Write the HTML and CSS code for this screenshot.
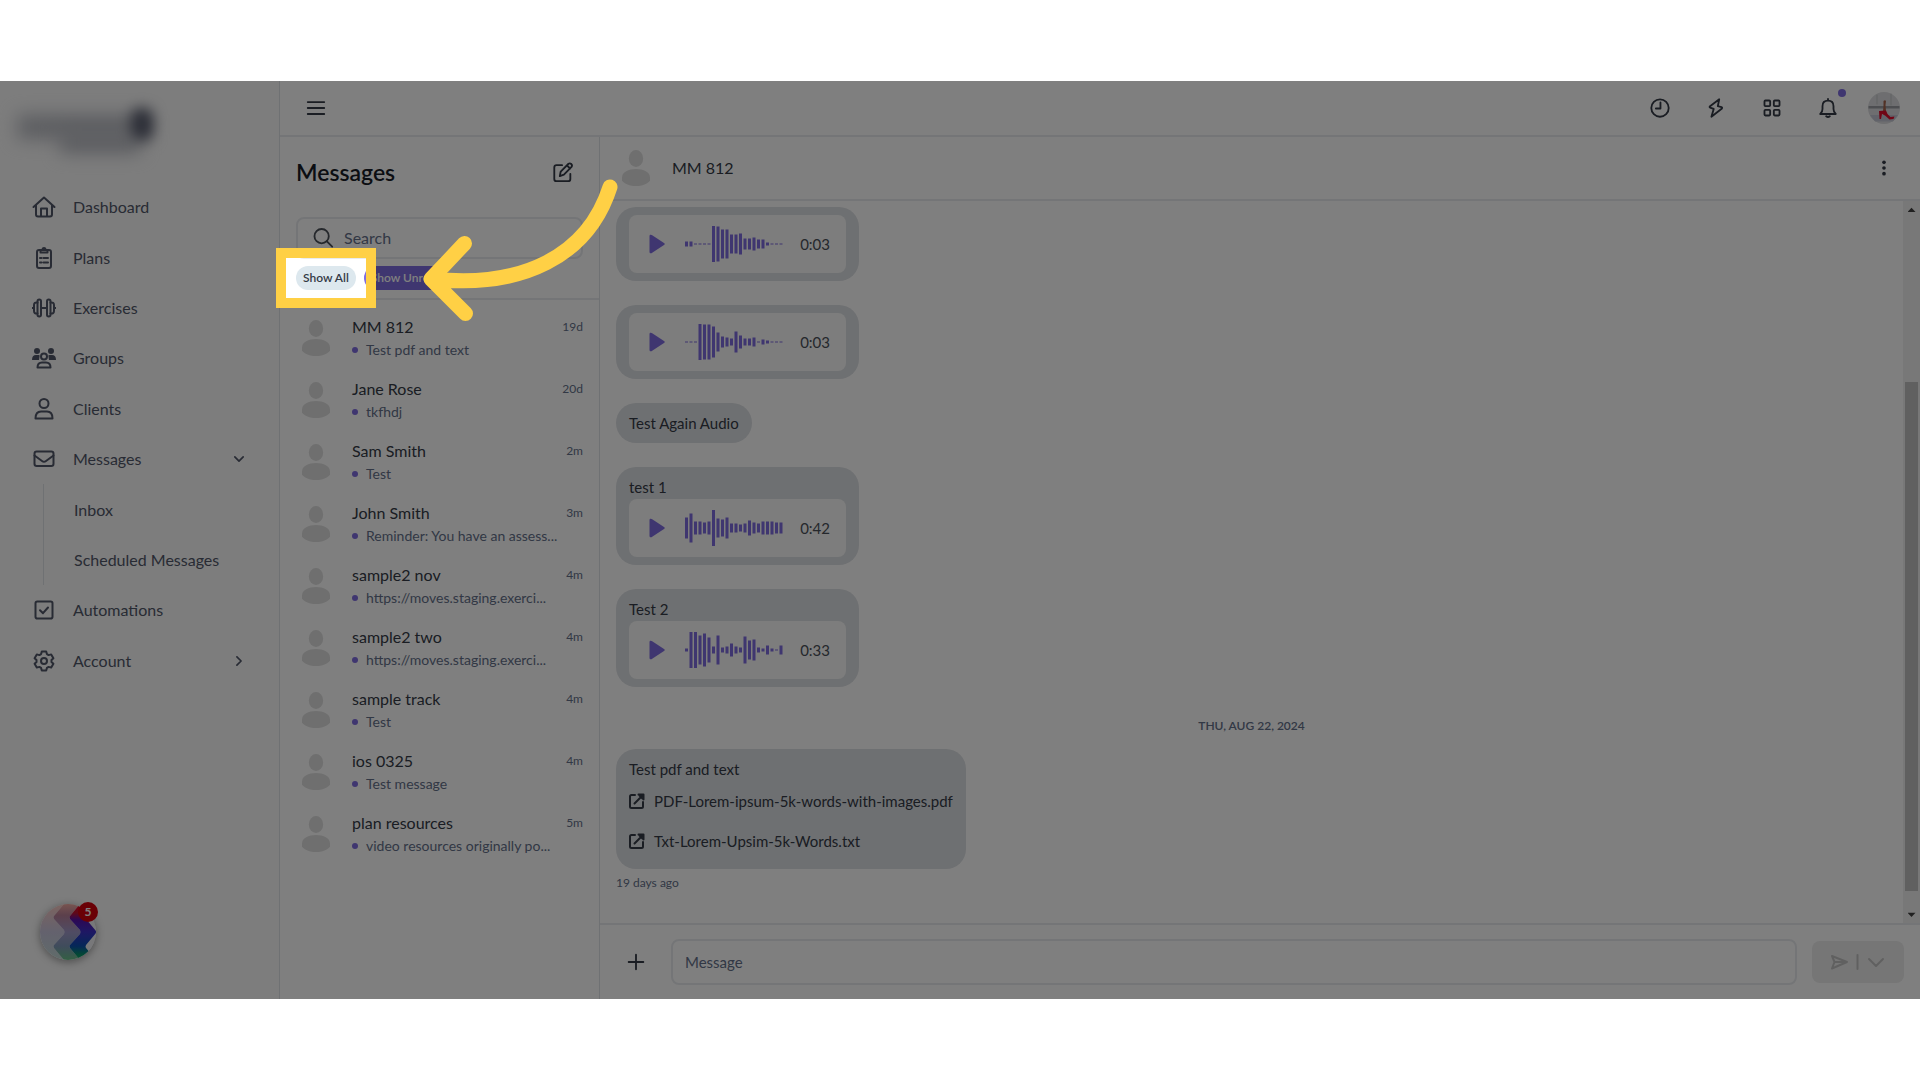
FILE: index.html
```html
<!DOCTYPE html>
<html lang="en">
<head>
<meta charset="utf-8">
<title>Messages</title>
<link rel="stylesheet" href="styles.css">
</head>
<body>
<svg class="defs" aria-hidden="true">
  <symbol id="person" viewBox="0 0 28 36"><ellipse cx="14" cy="8.500" rx="7.200" ry="8.500"/><path d="M14 19c7.500 0 14 3 14 8.500v3C26 34 20 36 14 36S2 34 0 30.500v-3C0 22 6.500 19 14 19z"/></symbol>
  <symbol id="play" viewBox="0 0 16 20"><path d="M0.500 2.300C0.500 0.600 2 0.400 3.200 1.300L15 9c1 0.700 1 1.300 0 2L3.200 18.700C2 19.600 0.500 19.400 0.500 17.700z"/></symbol>
  <symbol id="external" viewBox="0 0 16 16"><path d="M6 2H2.500Q1 2 1 3.500v10Q1 15 2.500 15h10Q14 15 14 13.500V9M5.500 10.500 14 2M9.500 1.500H14.500V6.500M10.500 2.500l3 3"/></symbol>
</svg>
<div class="app">
  <aside class="sidebar">
    <div class="logo" aria-hidden="true"><i class="logo-word"></i><i class="logo-line"></i><i class="logo-mark"></i></div>
    <nav>
      <ul class="nav">
        <li><a href="#"><svg viewBox="0 0 24 24"><path d="M1.500 12 12 2.500 22.500 12M4 10v9.500Q4 21.500 6 21.500h12q2 0 2-2V10M9 21.500v-8h6v8"/></svg>Dashboard</a></li>
        <li><a href="#"><svg viewBox="0 0 24 24"><rect x="5" y="4" width="14" height="18" rx="2"/><path d="M8.500 6.500V4h2q0-2 1.500-2t1.500 2h2v2.500zM8 12h1.500M11.500 12H16M8 16.500h1.500M11.500 16.500H16"/></svg>Plans</a></li>
        <li><a href="#"><svg viewBox="0 0 24 24"><path d="M9 12h6M0 12h1.500M22.500 12H24"/><rect x="5.500" y="3.500" width="3.500" height="17" rx="1.700"/><rect x="15" y="3.500" width="3.500" height="17" rx="1.700"/><path d="M5.500 6.500Q2 6 2 9v6q0 3 3.500 2.500M18.500 6.500Q22 6 22 9v6q0 3-3.500 2.500"/></svg>Exercises</a></li>
        <li><a href="#"><svg viewBox="0 0 24 24"><g class="solid"><circle cx="5" cy="5" r="3"/><circle cx="19" cy="5" r="3"/><path d="M0 14q0-5 4-5h3q1 0 .5 1.500L7 14zM24 14q0-5-4-5h-3q-1 0-.5 1.500L17 14z"/></g><circle cx="12" cy="10.500" r="3"/><path d="M5.500 21.500q0-5 4.500-5h4q4.500 0 4.500 5z"/></svg>Groups</a></li>
        <li><a href="#"><svg viewBox="0 0 24 24"><circle cx="12" cy="6.500" r="4.500"/><path d="M3.500 21.500q0-7 5.500-7h6q5.500 0 5.500 7z"/></svg>Clients</a></li>
        <li><a href="#"><svg viewBox="0 0 24 24"><rect x="2.500" y="4.500" width="19" height="14.500" rx="2.200"/><path d="M2.500 8.500 10 14q2 1.500 4 0l7.500-5.500"/></svg>Messages<svg class="caret" viewBox="0 0 12 12"><path d="M1 3.500l5 5 5-5"/></svg></a></li>
        <li class="subnav">
          <ul>
            <li><a href="#">Inbox</a></li>
            <li><a href="#">Scheduled Messages</a></li>
          </ul>
        </li>
        <li><a href="#"><svg viewBox="0 0 24 24"><rect x="3.500" y="3.500" width="17" height="17" rx="1.800"/><path d="M8 12.200l3 3 5-5.700"/></svg>Automations</a></li>
        <li><a href="#"><svg viewBox="0 0 24 24"><circle cx="12" cy="12" r="3"/><path d="M9.800 2.500h4.400l.7 2.600 1.700 1 2.600-.7 2.200 3.800L19.500 11v2l1.900 1.800-2.200 3.800-2.600-.7-1.700 1-.7 2.600H9.800l-.7-2.600-1.700-1-2.600.7-2.200-3.800L4.500 13v-2L2.600 9.200l2.200-3.800 2.600.7 1.700-1z"/></svg>Account<svg class="caret" viewBox="0 0 12 12"><path d="M3.500 1l5 5-5 5"/></svg></a></li>
      </ul>
    </nav>
  </aside>

  <div class="main">
    <header class="topbar">
      <button class="icon-btn" aria-label="Toggle menu"><svg viewBox="0 0 24 24"><path d="M3 5.500h18M3 12h18M3 18.500h18"/></svg></button>
      <div class="tools">
        <button class="icon-btn" aria-label="History"><svg viewBox="0 0 24 24"><circle cx="12" cy="12" r="9.500"/><path d="M12.500 6v6.500H7.500"/></svg></button>
        <button class="icon-btn" aria-label="Quick actions"><svg viewBox="0 0 24 24"><path d="M15.500 2.500 5.500 10q-1 1 0 1.500l4 1.500L7 21.500l11.500-9q.5-1-.5-1.500l-4-1z"/></svg></button>
        <button class="icon-btn" aria-label="Apps"><svg viewBox="0 0 24 24"><rect x="3.800" y="3.800" width="6.200" height="6.200" rx="1"/><rect x="14" y="3.800" width="6.200" height="6.200" rx="1"/><rect x="3.800" y="14" width="6.200" height="6.200" rx="1"/><rect x="14" y="14" width="6.200" height="6.200" rx="1"/></svg></button>
        <button class="icon-btn bell" aria-label="Notifications"><svg viewBox="0 0 24 24"><path d="M12 2v2M3.500 18.500q2.500-2 2.500-5.500v-3q0-6 6-6t6 6v3q0 3.500 2.500 5.500zM10 21q2 1.500 4 0"/></svg><i class="alert"></i></button>
        <button class="icon-btn profile" aria-label="Profile"><svg viewBox="0 0 32 32"><circle cx="16" cy="16" r="16" fill="#dcdde0"/><path d="M0.500 14h31v2.500H.5z" fill="#9a9ca2"/><path d="M2 23h28l-5 6.500H7z" fill="#c4c7d4"/><path d="M9 3v9M23 2v11" stroke="#c2c3c6" stroke-width="1"/><path d="M15.500 9q1.500-1.500 2.500 0l-.5 4 .5 6h-3l.5-5z" fill="#a5654d"/><path d="M11 19l7-.5 1.500 3.500 3 3 4-.5-1 2.500-4 .5-4.500-4-3-1.500-1 5h-1.500z" fill="#e00d2c"/></svg></button>
      </div>
    </header>

    <div class="workspace">
      <section class="inbox">
        <div class="inbox-head">
          <div class="title-row">
            <h1>Messages</h1>
            <button class="icon-btn" aria-label="New message"><svg viewBox="0 0 24 24"><path d="M11 4.500H5q-2.500 0-2.500 2.500v12.500Q2.500 22 5 22h12.500q2.500 0 2.500-2.500V14M8.500 16.500l1-5 8.500-8.500q1.500-1 3 .3t.3 3.200L13 14.800zM16.500 5l3.300 3.200"/></svg></button>
          </div>
          <label class="search"><svg viewBox="0 0 24 24"><circle cx="10.500" cy="10" r="7.800"/><path d="M16 15.500l6 6"/></svg><input type="text" placeholder="Search" aria-label="Search"></label>
          <div class="filters">
            <div class="guided">
              <button class="chip">Show All</button>
              <span class="spotlight"></span>
              <svg class="arrow" viewBox="415 175 210 155" aria-hidden="true"><path d="M610 187C588 256 522 289 432 279M464.500 243.500 431 279l34.500 34.500"/></svg>
            </div>
            <button class="chip chip-on">Show Unread</button>
          </div>
        </div>
        <ul class="threads">
          <li><svg class="person"><use href="#person"/></svg><div class="info"><div class="who"><b>MM 812</b><time>19d</time></div><p><span>Test pdf and text</span></p></div></li>
          <li><svg class="person"><use href="#person"/></svg><div class="info"><div class="who"><b>Jane Rose</b><time>20d</time></div><p><span>tkfhdj</span></p></div></li>
          <li><svg class="person"><use href="#person"/></svg><div class="info"><div class="who"><b>Sam Smith</b><time>2m</time></div><p><span>Test</span></p></div></li>
          <li><svg class="person"><use href="#person"/></svg><div class="info"><div class="who"><b>John Smith</b><time>3m</time></div><p><span>Reminder: You have an assess...</span></p></div></li>
          <li><svg class="person"><use href="#person"/></svg><div class="info"><div class="who"><b>sample2 nov</b><time>4m</time></div><p><span>https://moves.staging.exerci...</span></p></div></li>
          <li><svg class="person"><use href="#person"/></svg><div class="info"><div class="who"><b>sample2 two</b><time>4m</time></div><p><span>https://moves.staging.exerci...</span></p></div></li>
          <li><svg class="person"><use href="#person"/></svg><div class="info"><div class="who"><b>sample track</b><time>4m</time></div><p><span>Test</span></p></div></li>
          <li><svg class="person"><use href="#person"/></svg><div class="info"><div class="who"><b>ios 0325</b><time>4m</time></div><p><span>Test message</span></p></div></li>
          <li><svg class="person"><use href="#person"/></svg><div class="info"><div class="who"><b>plan resources</b><time>5m</time></div><p><span>video resources originally po...</span></p></div></li>
        </ul>
      </section>

      <section class="chat">
        <header class="chat-head">
          <svg class="person"><use href="#person"/></svg>
          <h2>MM 812</h2>
          <button class="icon-btn more" aria-label="More"><svg viewBox="0 0 24 24"><circle cx="12" cy="5.800" r="2"/><circle cx="12" cy="12" r="2"/><circle cx="12" cy="18.200" r="2"/></svg></button>
        </header>
        <div class="scroll">
          <div class="log">
            <div class="bubble"><div class="audio"><button class="play" aria-label="Play"><svg><use href="#play"/></svg></button><svg class="wave" data-bars="5,5,1,1,1,1,36,35,29,29,19,19,21,11,11,13,9,9,3,1,1,1"></svg><span>0:03</span></div></div>
            <div class="bubble"><div class="audio"><button class="play" aria-label="Play"><svg><use href="#play"/></svg></button><svg class="wave" data-bars="1,1,1,36,35,35,31,19,11,9,7,21,13,7,7,9,1,5,3,1,1,1"></svg><span>0:03</span></div></div>
            <div class="bubble"><p>Test Again Audio</p></div>
            <div class="bubble"><p>test 1</p><div class="audio"><button class="play" aria-label="Play"><svg><use href="#play"/></svg></button><svg class="wave" data-bars="21,29,13,13,11,13,36,19,17,21,9,9,7,9,15,11,9,13,13,13,11,11"></svg><span>0:42</span></div></div>
            <div class="bubble"><p>Test 2</p><div class="audio"><button class="play" aria-label="Play"><svg><use href="#play"/></svg></button><svg class="wave" data-bars="3,36,36,29,33,25,7,29,5,7,13,7,5,27,19,21,5,3,9,3,1,9"></svg><span>0:33</span></div></div>
            <div class="day">Thu, Aug 22, 2024</div>
            <div class="bubble last"><p>Test pdf and text</p>
              <a href="#"><svg><use href="#external"/></svg>PDF-Lorem-ipsum-5k-words-with-images.pdf</a>
              <a href="#"><svg><use href="#external"/></svg>Txt-Lorem-Upsim-5k-Words.txt</a>
            </div>
            <div class="ago">19 days ago</div>
          </div>
          <div class="track" aria-hidden="true"><i class="up"></i><i class="before"></i><i class="thumb"></i><i class="after"></i><i class="down"></i></div>
        </div>
        <form class="composer">
          <button type="button" class="icon-btn" aria-label="Add attachment"><svg viewBox="0 0 24 24"><path d="M12 4v16M4 12h16"/></svg></button>
          <input type="text" placeholder="Message" aria-label="Message">
          <button type="button" class="send" aria-label="Send"><svg viewBox="0 0 60 18"><path d="M4 3 19 9 4 15.500 6.500 9zM6.500 9H19M29.500 2v14M41 6l7 7 7-7"/></svg></button>
        </form>
      </section>
    </div>
  </div>

  <button class="widget" aria-label="Open help, 5 new">
    <svg viewBox="0 0 56 56">
      <defs>
        <linearGradient id="bright" x1="0" y1="0" x2="0" y2="1"><stop offset="0" stop-color="#f00020"/><stop offset=".16" stop-color="#c01030"/><stop offset=".28" stop-color="#5a10a8"/><stop offset=".5" stop-color="#3c30c8"/><stop offset=".75" stop-color="#0a4fb0"/><stop offset=".9" stop-color="#08906a"/><stop offset="1" stop-color="#10a860"/></linearGradient>
        <linearGradient id="mid" x1="0" y1="0" x2="0" y2="1"><stop offset="0" stop-color="#f0a8a0"/><stop offset=".2" stop-color="#b88098"/><stop offset=".5" stop-color="#a098c8"/><stop offset=".75" stop-color="#8098b8"/><stop offset="1" stop-color="#68c088"/></linearGradient>
        <linearGradient id="pale" x1="0" y1="0" x2="0" y2="1"><stop offset="0" stop-color="#f8c8c0"/><stop offset=".5" stop-color="#c8c4dc"/><stop offset="1" stop-color="#c0d8d4"/></linearGradient>
        <clipPath id="disc"><circle cx="28" cy="28" r="28"/></clipPath>
      </defs>
      <g clip-path="url(#disc)">
        <rect width="56" height="56" fill="#f0f0f4"/>
        <path d="M0 0H24L14 12q-1 2 0 3L24 26q1 2 0 4L14 41q-1 2 0 3L24 56H0z" fill="url(#pale)"/>
        <path d="M24 0H40L30 12q-1 2 0 3L40 26q1 2 0 4L30 41q-1 2 0 3L40 56H24L14 44q-1-2 0-3L24 30q1-2 0-4L14 15q-1-2 0-3z" fill="url(#mid)"/>
        <path d="M40 0H56L46 12q-1 2 0 3L56 27v2L46 41q-1 2 0 3L56 56H40L30 44q-1-2 0-3L40 30q1-2 0-4L30 15q-1-2 0-3z" fill="url(#bright)"/>
      </g>
    </svg>
    <span class="count">5</span>
  </button>
</div>
<script src="wave.js"></script>
</body>
</html>
```
FILE: wave.js
```js
// Draws each voice clip's level bars, centred on the middle line.
document.querySelectorAll('.wave').forEach(function (svg) {
  var bars = svg.dataset.bars.split(',').map(Number);
  svg.setAttribute('viewBox', '0 0 98 36');
  svg.innerHTML = bars.map(function (h, i) {
    return '<rect x="' + i * 4.5 + '" y="' + (36 - h) / 2 + '" width="3" height="' + h + '"/>';
  }).join('');
});
```
FILE: styles.css
```css
* { box-sizing: border-box; }

body {
  margin: 0;
  min-height: 100vh;
  display: flex;
  align-items: center;
  background: #fff;
  color: #2c303a;
  font: 16px/24px Lato, "Liberation Sans", sans-serif;
}

h1, h2, p, ul { margin: 0; padding: 0; font-weight: 400; }
ul { list-style: none; }
a { color: inherit; text-decoration: none; }
button, input { font: inherit; color: inherit; padding: 0; border: 0; background: none; }
svg { display: block; fill: none; stroke: currentColor; stroke-width: 2; stroke-linecap: round; stroke-linejoin: round; flex: none; }
.defs { position: absolute; width: 0; height: 0; }

.app {
  position: relative;
  overflow: hidden;
  display: flex;
  width: 100%;
  height: 85vh;
  background: #fff;
}

/* Sidebar */
.sidebar {
  flex: none;
  width: 280px;
  background: #fafafa;
  border-right: 1px solid #dfe2e6;
}
.logo { position: relative; height: 101px; }
.logo i { position: absolute; filter: blur(9px); background: #b9bbc2; }
.logo .logo-word { left: 18px; top: 34px; width: 130px; height: 24px; }
.logo .logo-line { left: 60px; top: 50px; width: 80px; height: 22px; }
.logo .logo-mark { left: 131px; top: 27px; width: 22px; height: 32px; border-radius: 10px; background: #565a6c; filter: blur(7px); }

.nav { display: grid; grid-template-rows: repeat(10, 1fr); height: 504px; color: #515769; }
.nav a { display: flex; align-items: center; height: 100%; padding: 0 35px 0 32px; gap: 17px; }
.nav svg { width: 24px; height: 24px; }
.nav .solid { fill: currentColor; stroke: none; }
.nav .caret { width: 10px; height: 10px; margin-left: auto; }
.subnav { grid-row: span 2; margin-left: 43px; border-left: 1px solid #dfe2e6; }
.subnav ul { display: grid; grid-template-rows: 1fr 1fr; height: 100%; }
.subnav a { padding: 0 0 0 30px; }

/* Top bar */
.main { flex: 1; min-width: 0; display: flex; flex-direction: column; color: #343a46; }
.topbar {
  display: flex;
  align-items: center;
  justify-content: space-between;
  height: 56px;
  padding: 0 20px;
  border-bottom: 2px solid #e9ebee;
}
.icon-btn { display: grid; place-items: center; width: 32px; height: 32px; }
.icon-btn svg { width: 22px; height: 22px; }
.tools { display: flex; gap: 24px; }
.bell { position: relative; }
.alert { position: absolute; right: -2px; top: -3px; width: 8px; height: 8px; border-radius: 50%; background: #7f6ce0; }
.icon-btn.profile svg { width: 32px; height: 32px; stroke-width: 0; }

.workspace { flex: 1; min-height: 0; display: flex; }

/* Conversation list */
.inbox { flex: none; width: 320px; border-right: 1px solid #dfe2e6; }
.inbox-head { padding: 19px 16px 8px; border-bottom: 2px solid #e9ebee; }
.title-row { display: flex; align-items: center; justify-content: space-between; height: 32px; }
h1 { font-size: 23px; line-height: 32px; font-weight: 600; color: #181c26; }
.title-row .icon-btn { margin-right: 4px; }
.search {
  display: flex;
  align-items: center;
  gap: 10px;
  height: 42px;
  margin: 29px 0 7px;
  padding: 0 14px;
  border: 2px solid #e9ebee;
  border-radius: 8px;
}
.search svg { width: 22px; height: 22px; color: #4b5058; }
.search input { flex: 1; min-width: 0; }
input::placeholder { color: #64708a; opacity: 1; }
.filters { display: flex; gap: 8px; }
.guided { position: relative; }
.chip {
  height: 24px;
  padding: 0 7px;
  border-radius: 12px;
  background: #dde8ee;
  color: #343a46;
  font-size: 12px;
  line-height: 24px;
  font-weight: 600;
  display: block;
}
.chip-on { background: #7f6ce0; color: #fff; }

/* Tour step: a framed opening, with everything around it dimmed */
.spotlight {
  position: absolute;
  z-index: 10;
  inset: -18px -20px;
  border: 10px solid #ffd045;
  box-shadow: 0 0 0 4000px rgba(0, 0, 0, 0.5);
  pointer-events: none;
}
.arrow {
  position: absolute;
  z-index: 11;
  left: 119px;
  top: -91px;
  width: 210px;
  height: 155px;
  color: #ffd045;
  stroke-width: 15;
}

.threads { padding-top: 7px; }
.threads li { display: flex; align-items: center; gap: 22px; height: 62px; padding: 0 16px 0 22px; }
.person { width: 28px; height: 36px; fill: #dfdfdf; stroke: none; }
.info { flex: 1; min-width: 0; }
.who { display: flex; justify-content: space-between; }
.who b { font-weight: 400; }
.who time { font-size: 12px; line-height: 24px; color: #64708a; }
.threads p { display: flex; align-items: center; gap: 8px; height: 22px; font-size: 14px; color: #64708a; white-space: nowrap; }
.threads p::before { content: ""; width: 6px; height: 6px; border-radius: 50%; background: #7f6ce0; }

/* Chat */
.chat { flex: 1; min-width: 0; display: flex; flex-direction: column; font-size: 15px; }
.chat-head {
  display: flex;
  align-items: center;
  gap: 22px;
  height: 64px;
  padding: 0 20px 0 22px;
  border-bottom: 2px solid #e9ebee;
}
h2 { font-size: 16px; }
.more { margin-left: auto; }
.more svg { fill: currentColor; stroke: none; }
.scroll { flex: 1; min-height: 0; display: flex; }
.log { flex: 1; min-width: 0; overflow: hidden; padding: 6px 16px; }
.bubble {
  width: fit-content;
  margin-bottom: 24px;
  padding: 8px 13px;
  border-radius: 20px;
  background: #dde0e4;
}
.bubble.last { margin-bottom: 2px; }
.bubble a { display: flex; align-items: center; gap: 9px; height: 40px; }
.bubble a svg { width: 16px; height: 16px; }
.audio {
  display: flex;
  align-items: center;
  width: 217px;
  height: 58px;
  padding: 0 16px 0 20px;
  border-radius: 8px;
  background: #fafafa;
}
.play svg { width: 16px; height: 20px; fill: #7f6ce0; stroke: none; }
.wave { width: 98px; height: 36px; margin-left: 20px; fill: #7f6ce0; stroke: none; }
.audio span { margin-left: auto; color: #4b5058; }
.day { height: 38px; font-size: 12px; line-height: 30px; font-weight: 600; text-align: center; text-transform: uppercase; color: #64708a; }
.ago { font-size: 12px; line-height: 24px; color: #64708a; }

.track { display: flex; flex-direction: column; align-items: center; width: 17px; background: #f1f1f1; }
.up, .down { width: 8px; height: 17px; background: #404040; }
.up { clip-path: polygon(50% 40%, 100% 65%, 0 65%); }
.down { clip-path: polygon(50% 65%, 100% 40%, 0 40%); }
.before { flex: 164; }
.thumb { flex: 508; width: 13px; background: #c1c1c1; }
.after { flex: 15; }

.composer {
  display: flex;
  align-items: center;
  height: 76px;
  padding: 0 16px 0 20px;
  border-top: 2px solid #e9ebee;
}
.composer input {
  flex: 1;
  min-width: 0;
  height: 46px;
  margin: 0 15px 0 19px;
  padding: 0 12px;
  border: 2px solid #e9ebee;
  border-radius: 8px;
}
.send { display: grid; place-items: center; width: 92px; height: 42px; border-radius: 8px; background: #ececec; color: #c1c1c1; }
.send svg { width: 60px; height: 18px; }

/* Help widget, floats over the sidebar */
.widget {
  position: absolute;
  left: 40px;
  bottom: 39px;
  width: 56px;
  height: 56px;
  border-radius: 50%;
  box-shadow: 0 2px 8px rgba(0, 0, 0, 0.4);
}
.widget svg { width: 56px; height: 56px; stroke: none; }
.count {
  position: absolute;
  right: -2px;
  top: -2px;
  width: 20px;
  height: 20px;
  border-radius: 50%;
  background: #d4000c;
  color: #fff;
  font-size: 12px;
  line-height: 20px;
  font-weight: 700;
}
```
